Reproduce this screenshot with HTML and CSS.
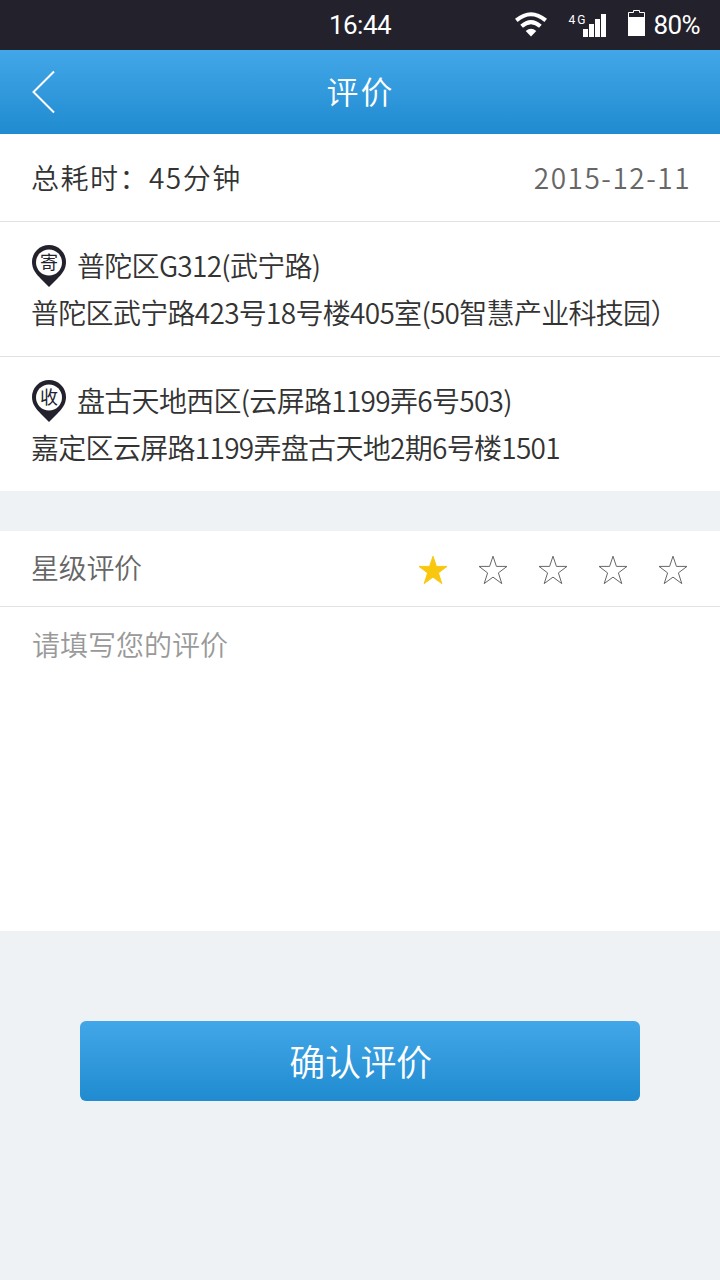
FILE: index.html
```html
<!DOCTYPE html>
<html lang="zh-CN">
  <head>
    <meta charset="UTF-8" />
    <meta name="viewport" content="width=device-width, initial-scale=1.0" />
    <title>评价</title>
    <link rel="stylesheet" href="styles.css" />
  </head>
  <body>
    <svg class="sprite" width="0" height="0">
      <symbol id="star" viewBox="0 0 30 30">
        <path d="M15 1.2 L18.4 11.4 H29 L20.4 17.9 L23.8 28.6 L15 22.1 L6.2 28.6 L9.6 17.9 L1 11.4 H11.6 Z" />
      </symbol>
      <symbol id="pin" viewBox="0 0 34 42">
        <path d="M17 0 A17 17 0 0 1 34 17 C34 24 30 29 25 34 L17 42 L9 34 C4 29 0 24 0 17 A17 17 0 0 1 17 0 Z" fill="#23212c" />
        <circle cx="17" cy="17.5" r="13" fill="#fff" />
      </symbol>
    </svg>
    <div class="status-bar">
      <span></span>
      <span class="clock">16:44</span>
      <div class="status-icons">
        <svg class="wifi" width="32" height="25" viewBox="0 0 32 25">
          <g fill="none" stroke="#fff" stroke-width="4">
            <path d="M1.3 8.4 Q16 -4 30.7 8.4" />
            <path d="M6.6 14.2 Q16 6 25.4 14.2" />
          </g>
          <path d="M10.7 19 Q16 14.6 21.3 19 L16 24.6 Z" fill="#fff" />
        </svg>
        <span class="network">4G</span>
        <svg class="signal" width="23" height="23" viewBox="0 0 23 23" fill="#fff">
          <rect x="0" y="15" width="5" height="8" />
          <rect x="6" y="10" width="5" height="13" />
          <rect x="12" y="5" width="5" height="18" />
          <rect x="18" y="0" width="5" height="23" />
        </svg>
        <svg class="battery" width="17" height="26" viewBox="0 0 17 26">
          <path d="M.5 25.5 V2.5 H5.5 V.5 H11.5 V2.5 H16.5 V25.5 Z" fill="none" stroke="#fff" />
          <rect y="7" width="17" height="19" fill="#fff" />
        </svg>
        <span class="percent">80%</span>
      </div>
    </div>
    <header class="header">
      <a class="back" href="#">
        <svg width="24" height="44" viewBox="0 0 24 44">
          <path d="M22 1.5 L1.5 22 L22 42.5" fill="none" stroke="#fff" stroke-width="2" />
        </svg>
      </a>
      <h1>评价</h1>
      <span></span>
    </header>
    <section class="order">
      <div class="summary">
        <span>总耗时：45分钟</span>
        <span class="date">2015-12-11</span>
      </div>
      <div class="address">
        <div class="place">
          <span class="pin"><svg width="34" height="42"><use href="#pin" /></svg><b>寄</b></span>
          <span>普陀区G312(武宁路)</span>
        </div>
        <p>普陀区武宁路423号18号楼405室(50智慧产业科技园）</p>
      </div>
      <div class="address">
        <div class="place">
          <span class="pin"><svg width="34" height="42"><use href="#pin" /></svg><b>收</b></span>
          <span>盘古天地西区(云屏路1199弄6号503)</span>
        </div>
        <p>嘉定区云屏路1199弄盘古天地2期6号楼1501</p>
      </div>
    </section>
    <form class="review">
      <div class="rating">
        <span>星级评价</span>
        <div class="stars">
          <svg class="star active"><use href="#star" /></svg>
          <svg class="star"><use href="#star" /></svg>
          <svg class="star"><use href="#star" /></svg>
          <svg class="star"><use href="#star" /></svg>
          <svg class="star"><use href="#star" /></svg>
        </div>
      </div>
      <textarea class="comment" placeholder="请填写您的评价"></textarea>
      <button type="button" class="submit">确认评价</button>
    </form>
  </body>
</html>
```
FILE: styles.css
```css
/* Reset */
* {
  margin: 0;
  padding: 0;
  box-sizing: border-box;
}
body {
  font-family: "Noto Sans CJK SC", sans-serif;
  font-size: 28px;
  font-weight: 350;
  color: #333;
  background: #eef2f5;
  min-height: 100vh;
}
svg {
  display: block;
}
.sprite {
  position: absolute;
}
/* Status bar */
.status-bar {
  display: grid;
  grid-template-columns: 1fr auto 1fr;
  align-items: center;
  height: 50px;
  padding-right: 20px;
  background: #23212c;
  color: #fff;
  font-family: Roboto, sans-serif;
  font-size: 26px;
  font-weight: 400;
  letter-spacing: -0.5px;
}
.clock {
  padding-left: 20px;
}
.status-icons {
  display: flex;
  justify-content: flex-end;
}
.status-icons svg {
  flex: none;
}
.wifi {
  margin: 3px 22px 0 0;
}
.network {
  margin-top: 4px;
  font-size: 12px;
  line-height: 14px;
  letter-spacing: 2px;
}
.signal {
  margin: 5px 22px 0 -5px;
}
.battery {
  margin: 1px 9px 0 0;
}
.percent {
  line-height: 32px;
  letter-spacing: -0.6px;
}
/* Header */
.header {
  display: grid;
  grid-template-columns: 1fr auto 1fr;
  align-items: center;
  height: 84px;
  padding: 0 31px 0 32px;
  background: linear-gradient(#42a7e8, #208bd0);
  color: #fff;
}
h1 {
  margin-top: -4px;
  font-size: 32px;
  font-weight: 350;
  line-height: 48px;
  letter-spacing: 2px;
}
/* Order info */
.order {
  background: #fff;
}
.summary {
  display: flex;
  justify-content: space-between;
  height: 88px;
  padding: 0 29px 0 31px;
  border-bottom: 1px solid #e1e1e1;
  line-height: 86px;
  letter-spacing: 1.5px;
}
.date {
  color: #666;
}
.address {
  height: 135px;
  padding: 20px 31px 0;
  border-bottom: 1px solid #e1e1e1;
  line-height: 47px;
  letter-spacing: -0.7px;
  white-space: nowrap;
}
.address:last-child {
  height: 134px;
  border-bottom: none;
}
.place {
  display: flex;
  height: 47px;
}
.pin {
  position: relative;
  width: 34px;
  height: 42px;
  margin: 3px 11px 0 1px;
}
.pin b {
  position: absolute;
  top: 3px;
  left: 0;
  width: 34px;
  color: #23212c;
  font-size: 18px;
  font-weight: 400;
  line-height: 26px;
  letter-spacing: 0;
  text-align: center;
}
/* Review form */
.review {
  margin-top: 40px;
}
.rating {
  display: flex;
  justify-content: space-between;
  height: 76px;
  padding: 0 32px 0 31px;
  background: #fff;
  border-bottom: 1px solid #e1e1e1;
  color: #666;
  line-height: 73px;
  letter-spacing: -0.3px;
}
.stars {
  display: flex;
  gap: 30px;
}
.star {
  width: 30px;
  height: 30px;
  margin-top: 24px;
  fill: none;
  stroke: #666;
}
.star.active {
  fill: #f9c80e;
  stroke: #f9c80e;
}
.comment {
  display: block;
  width: 100%;
  height: 324px;
  padding: 16px 32px;
  border: none;
  outline: none;
  resize: none;
  background: #fff;
  color: #333;
  font: inherit;
  line-height: 42px;
}
.comment::placeholder {
  color: #999;
}
.submit {
  display: block;
  width: 560px;
  height: 80px;
  margin: 90px auto 0;
  padding: 0 0 2px 1px;
  border: none;
  border-radius: 6px;
  background: linear-gradient(#42a7e8, #208bd0);
  color: #fff;
  font: inherit;
  font-size: 36px;
  letter-spacing: -0.4px;
  cursor: pointer;
}
```
